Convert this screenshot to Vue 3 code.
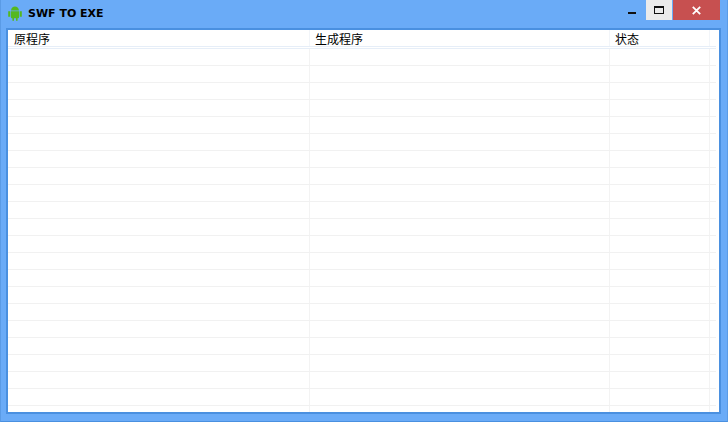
<script setup>
const rows = Array.from({ length: 22 }, (_, i) => i)
const columns = [
  { name: '原程序', width: 302, pad: 6 },
  { name: '生成程序', width: 300, pad: 5 },
  { name: '状态', width: 100, pad: 5 },
]
</script>

<template>
  <div class="window">
    <header class="titlebar">
      <svg class="logo" width="14" height="15" viewBox="0 0 14 15">
        <path fill="#55b81f" d="M3 4.600C3.200 2 5 .5 7 .5s3.800 1.500 4 4.100ZM3 5.300h8v6.200a.8.800 0 0 1-.8.800H9.600v2.500H8v-2.500H6v2.500H4.400v-2.500h-.6a.8.800 0 0 1-.8-.8ZM.2 5.300h2.100v5.500H.2ZM11.700 5.300h2.100v5.500h-2.100Z" />
      </svg>
      <span class="title">SWF TO EXE</span>
      <div class="controls">
        <div class="btn min"><span class="dash"></span></div>
        <div class="btn max"><span class="box"></span></div>
        <div class="btn close">
          <svg width="9" height="9" viewBox="0 0 9 9"><path d="M.8.800l7.400 7.400M8.200.800L.8 8.200" stroke="#fff" stroke-width="1.800" /></svg>
        </div>
      </div>
    </header>
    <main class="panel">
      <div class="thead">
        <div v-for="c in columns" :key="c.name" class="th" :style="{ width: c.width + 'px', paddingLeft: c.pad + 'px' }">{{ c.name }}</div>
      </div>
      <div class="tbody">
        <div v-for="r in rows" :key="r" class="row">
          <div v-for="c in columns" :key="c.name" class="td" :style="{ width: c.width + 'px' }"></div>
        </div>
      </div>
    </main>
  </div>
</template>

<style>
html, body { margin: 0; overflow: hidden; background: #fff; }
</style>

<style scoped>
.window {
  width: 728px; height: 422px; box-sizing: border-box;
  background: #6aabf7; border: 1px solid #5a9be6; border-top: 0; border-bottom-color: #4a90e0;
  padding: 0 6px 7px 5px; display: flex; flex-direction: column;
  font-family: "Noto Sans CJK SC", sans-serif;
}
.titlebar { height: 28px; display: flex; align-items: flex-start; flex: none; }
.logo { margin: 6px 0 0 2px; flex: none; }
.title { margin: 6px 0 0 6px; font: bold 11px/16px "DejaVu Sans", sans-serif; color: #000; }
.controls { margin-left: auto; margin-right: 1px; display: flex; }
.btn { height: 20px; display: flex; align-items: center; justify-content: center; }
.min { width: 28px; }
.dash { width: 8px; height: 2px; background: #111; margin-top: 6px; }
.max { width: 26px; background: #ebebeb; }
.box { width: 8px; height: 5px; border: 1px solid #111; border-top-width: 2px; }
.close { width: 47px; margin-left: 1px; background: #c75050; }
.panel { flex: 1; min-height: 0; background: #fff; border: 2px solid #4a90e0; overflow: hidden; }
.thead { display: flex; height: 16px; width: 708px; border-bottom: 3px double #e6eef8; }
.th { box-sizing: border-box; font-size: 12px; line-height: 18px; color: #000; flex: none; border-right: 1px solid #f2f5f9; }
.row { display: flex; width: 708px; height: 16px; border-bottom: 1px solid #f1f1f1; }
.td { box-sizing: border-box; flex: none; border-right: 1px solid #f3f3f3; }
</style>
